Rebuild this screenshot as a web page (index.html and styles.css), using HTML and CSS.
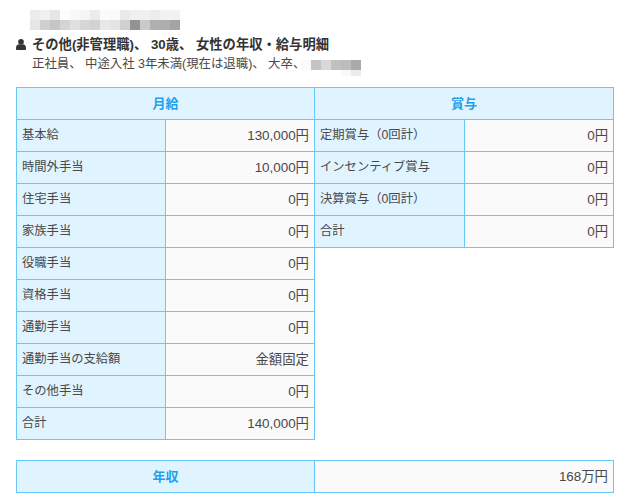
FILE: index.html
```html
<!DOCTYPE html>
<html lang="ja">
<head>
<meta charset="utf-8">
<title>年収・給与明細</title>
<link rel="stylesheet" href="styles.css">
</head>
<body>
<header class="head">
  <div class="mosaic-line">
    <svg class="mosaic" width="150" height="20" viewBox="0 0 15 2" shape-rendering="crispEdges">
      <g>
        <rect x="0" y="0" width="1" height="1" fill="#ececec"/><rect x="1" y="0" width="1" height="1" fill="#f0f0f0"/><rect x="2" y="0" width="1" height="1" fill="#e6e6e6"/><rect x="3" y="0" width="1" height="1" fill="#fdfdfd"/><rect x="4" y="0" width="1" height="1" fill="#f8f8f8"/><rect x="5" y="0" width="1" height="1" fill="#f5f5f5"/><rect x="6" y="0" width="1" height="1" fill="#ececec"/><rect x="7" y="0" width="1" height="1" fill="#fbfbfb"/><rect x="8" y="0" width="1" height="1" fill="#fafafa"/><rect x="9" y="0" width="1" height="1" fill="#eaeaea"/><rect x="10" y="0" width="1" height="1" fill="#f0f0f0"/><rect x="11" y="0" width="1" height="1" fill="#f0f0f0"/><rect x="12" y="0" width="1" height="1" fill="#ececec"/><rect x="13" y="0" width="1" height="1" fill="#f2f2f2"/><rect x="14" y="0" width="1" height="1" fill="#f2f2f2"/>
        <rect x="0" y="1" width="1" height="1" fill="#e6e6e6"/><rect x="1" y="1" width="1" height="1" fill="#cfcfcf"/><rect x="2" y="1" width="1" height="1" fill="#c6c6c6"/><rect x="3" y="1" width="1" height="1" fill="#d4d4d4"/><rect x="4" y="1" width="1" height="1" fill="#e0e0e0"/><rect x="5" y="1" width="1" height="1" fill="#d6d6d6"/><rect x="6" y="1" width="1" height="1" fill="#d2d2d2"/><rect x="7" y="1" width="1" height="1" fill="#e8e8e8"/><rect x="8" y="1" width="1" height="1" fill="#e4e4e4"/><rect x="9" y="1" width="1" height="1" fill="#d0d0d0"/><rect x="10" y="1" width="1" height="1" fill="#939393"/><rect x="11" y="1" width="1" height="1" fill="#cacaca"/><rect x="12" y="1" width="1" height="1" fill="#b0b0b0"/><rect x="13" y="1" width="1" height="1" fill="#aeaeae"/><rect x="14" y="1" width="1" height="1" fill="#a4a4a4"/>
      </g>
    </svg>
  </div>
  <h1 class="title">
    <svg class="person" width="10" height="11" viewBox="0 0 10 11"><circle cx="5" cy="2.900" r="2.800" fill="#333"/><path fill="#333" d="M3.200 5.300C1.400 5.600.2 6.600.1 8.200L0 10c0 .6.400 1 1 1h8c.6 0 1-.4 1-1l-.1-1.800C9.800 6.600 8.600 5.600 6.800 5.300 6.300 5.800 5.700 6 5 6s-1.300-.2-1.800-.7z"/></svg>
    <span>その他(非管理職)、 30歳、 女性の年収・給与明細</span>
  </h1>
  <p class="sub">
    <span>正社員、 中途入社 3年未満(現在は退職)、 大卒、</span>
    <svg class="mosaic-sub" width="60" height="16" viewBox="0 0 6 1.600" shape-rendering="crispEdges">
      <rect x="0" y="0" width="1" height="1" fill="#fafafa"/><rect x="1" y="0" width="1" height="1" fill="#c4c4c4"/><rect x="2" y="0" width="1" height="1" fill="#d8d8d8"/><rect x="3" y="0" width="1" height="1" fill="#c0c0c0"/><rect x="4" y="0" width="1" height="1" fill="#bcbcbc"/><rect x="5" y="0" width="1" height="1" fill="#aaaaaa"/>
      <rect x="4" y="1" width="1" height="0.600" fill="#f8f8f8"/><rect x="5" y="1" width="1" height="0.600" fill="#ececec"/>
    </svg>
  </p>
</header>

<div class="tables">
<table class="pay">
  <colgroup><col class="c1"><col class="c2"><col class="c3"><col class="c4"></colgroup>
  <tr><th colspan="2">月給</th><th colspan="2">賞与</th></tr>
  <tr><td class="k">基本給</td><td class="v">130,000円</td><td class="k">定期賞与（0回計）</td><td class="v">0円</td></tr>
  <tr><td class="k">時間外手当</td><td class="v">10,000円</td><td class="k">インセンティブ賞与</td><td class="v">0円</td></tr>
  <tr><td class="k">住宅手当</td><td class="v">0円</td><td class="k">決算賞与（0回計）</td><td class="v">0円</td></tr>
  <tr><td class="k">家族手当</td><td class="v">0円</td><td class="k">合計</td><td class="v">0円</td></tr>
  <tr><td class="k">役職手当</td><td class="v">0円</td><td class="blank" colspan="2" rowspan="6"></td></tr>
  <tr><td class="k">資格手当</td><td class="v">0円</td></tr>
  <tr><td class="k">通勤手当</td><td class="v">0円</td></tr>
  <tr><td class="k">通勤手当の支給額</td><td class="v">金額固定</td></tr>
  <tr><td class="k">その他手当</td><td class="v">0円</td></tr>
  <tr><td class="k">合計</td><td class="v">140,000円</td></tr>
</table>

<table class="pay annual">
  <colgroup><col class="half"><col class="half"></colgroup>
  <tr><th>年収</th><td class="v">168万円</td></tr>
</table>
</div>
</body>
</html>
```
FILE: styles.css
```css
html, body { margin: 0; padding: 0; background: #fff; }
body {
  font-family: "Liberation Sans", "Noto Sans CJK JP", sans-serif;
  font-size: 12px;
  color: #484848;
  padding: 10px 0 0 16px;
  width: 611px;
  height: 494px;
  overflow: hidden;
}
.head { height: 77px; }
.mosaic-line { height: 20px; padding-left: 14px; }
.mosaic { display: block; }
.title {
  margin: 7px 0 0;
  font-size: 13.3px;
  font-weight: 700;
  color: #333;
  line-height: 16px;
  display: flex;
  align-items: center;
  gap: 6px;
  white-space: pre;
}
.person { flex: none; margin-top: -1px; }
.sub {
  margin: 3px 0 0 16px;
  font-size: 12.4px;
  line-height: 16px;
  display: flex;
  align-items: flex-start;
}
.mosaic-sub { flex: none; margin: 4px 0 0 -4px; }
.pay {
  border-collapse: collapse;
  table-layout: fixed;
  width: 598px;
  font-size: 12.3px;
}
.pay tr { height: 32px; }
.c1 { width: 149px; }
.c2 { width: 149px; }
.c3 { width: 150px; }
.c4 { width: 149px; }
.half { width: 298px; }
.half + .half { width: 299px; }
.pay th, .pay td {
  border: 1px solid #66c7f8;
  padding: 0 5px 3px;
  box-sizing: border-box;
  font-weight: 400;
}
.pay th {
  background: #e0f4ff;
  color: #1ba1ee;
  font-size: 13px;
  font-weight: 700;
  text-align: center;
  padding-bottom: 2px;
}
.k { background: #e0f4ff; text-align: left; }
.v { background: #fafafa; text-align: right; font-size: 13.4px; }
.pay td.blank { background: #fff; border-right: 0; border-bottom: 0; }
.annual { margin-top: 20px; }
```
